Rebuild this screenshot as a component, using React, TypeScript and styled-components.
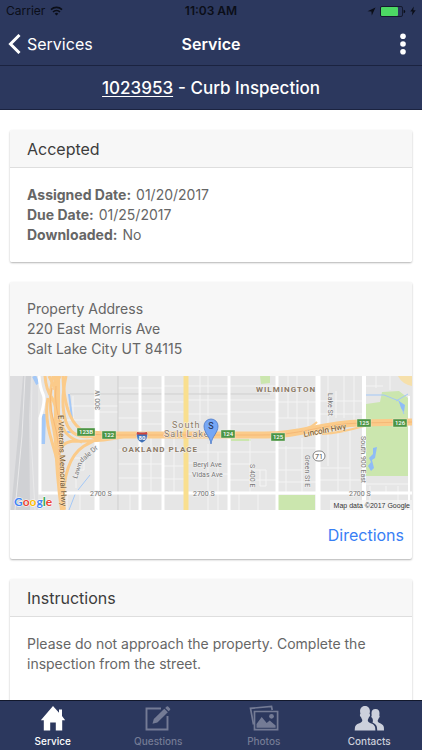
import React from "react";
import styled, { createGlobalStyle } from "styled-components";

const GlobalStyle = createGlobalStyle`
  * { box-sizing: border-box; }
  body {
    margin: 0;
    background: #fff;
    color: #666;
    font-family: Inter, "Liberation Sans", sans-serif;
    font-size: 14px;
    line-height: 20px;
  }
  button { font: inherit; border: 0; background: none; padding: 0; color: inherit; cursor: pointer; }
`;

const Screen = styled.div`
  display: flex;
  flex-direction: column;
  height: 100vh;
`;

const TopBar = styled.header`
  flex: none;
  background: #2c385e;
  color: #fff;
`;

const StatusBar = styled.div`
  display: grid;
  grid-template-columns: 1fr auto 1fr;
  align-items: center;
  height: 22px;
  padding: 0 6px;
  color: #0b0e18;
  font-size: 12px;
  line-height: 22px;
`;

const StatusGroup = styled.div<{ $end?: boolean }>`
  display: flex;
  align-items: center;
  justify-content: ${(p) => (p.$end ? "flex-end" : "flex-start")};
  gap: ${(p) => (p.$end ? 4 : 5)}px;
`;

const Clock = styled.time`
  font-weight: 600;
`;

const NavBar = styled.div`
  display: grid;
  grid-template-columns: 1fr auto 1fr;
  align-items: center;
  height: 44px;
  padding: 0 8px;
  border-bottom: 1px solid #1b2340;
`;

const BackLink = styled.a`
  display: flex;
  align-items: center;
  gap: 6px;
  color: #fff;
  font-size: 16px;
  text-decoration: none;
`;

const NavTitle = styled.h1`
  margin: 0;
  font-size: 16px;
  font-weight: 600;
`;

const MenuButton = styled.button`
  display: flex;
  justify-self: end;
  padding: 0 8px;
`;

const SubHeader = styled.h2`
  display: flex;
  justify-content: center;
  align-items: center;
  gap: 5px;
  height: 44px;
  margin: 0;
  border-bottom: 1px solid #1b2340;
  font-size: 17px;
  font-weight: 500;
`;

const OrderLink = styled.a`
  color: #fff;
  text-underline-offset: 2px;
`;

const Content = styled.main`
  flex: 1;
  min-height: 0;
  overflow-y: auto;
  scrollbar-width: none;
  display: flex;
  flex-direction: column;
  gap: 20px;
  padding: 20px 10px;
`;

const Card = styled.section`
  flex: none;
  overflow: hidden;
  border-radius: 2px;
  background: #fff;
  box-shadow: 0 1px 2px rgba(0, 0, 0, 0.3);
`;

const CardTitle = styled.h3`
  margin: 0;
  padding: 9px 17px 8px;
  border-bottom: 1px solid #dedede;
  background: #f7f7f7;
  color: #3c3c3c;
  font-size: 16px;
  font-weight: 400;
`;

const CardBody = styled.div<{ $shaded?: boolean }>`
  padding: 17px;
  background: ${(p) => (p.$shaded ? "#f7f7f7" : "#fff")};
`;

const Facts = styled.dl`
  margin: 0;
`;

const Fact = styled.div`
  display: flex;
  gap: 5px;
  dt { font-weight: 700; }
  dd { margin: 0; }
`;

const Address = styled.address`
  font-style: normal;
`;

const Paragraph = styled.p`
  margin: 0 0 20px;
`;

const CardFooter = styled.div`
  display: flex;
  justify-content: flex-end;
  align-items: center;
  height: 49px;
  padding: 0 8px;
`;

const TextLink = styled.a`
  color: #387ef5;
  font-size: 16px;
  text-decoration: none;
`;

const MapPicture = styled.svg`
  display: block;
  width: 100%;
  height: auto;
  font-family: Roboto, "Liberation Sans", sans-serif;
`;

const TabBar = styled.nav`
  flex: none;
  display: grid;
  grid-template-columns: repeat(4, 1fr);
  height: 50px;
  border-top: 1px solid #12182c;
  background: #2c385e;
`;

const tones = { active: "#fff", muted: "#747b95", bright: "#ccd0dc" };

const Tab = styled.button<{ $tone: keyof typeof tones }>`
  display: flex;
  flex-direction: column;
  align-items: center;
  gap: 2px;
  padding-top: 3px;
  color: ${(p) => tones[p.$tone]};
  font-size: 10px;
  font-weight: 500;
  line-height: 14px;
`;

const WifiIcon = () => (
  <svg width="13" height="10" viewBox="0 0 13 10" fill="none" stroke="currentColor" strokeWidth="1.6" aria-hidden="true">
    <path d="M1 3.6a8 8 0 0 1 11 0M3 6a5 5 0 0 1 7 0" />
    <path d="M6.5 9.6 4.7 7.7a2.6 2.6 0 0 1 3.6 0Z" fill="currentColor" stroke="none" />
  </svg>
);

const LocationIcon = () => (
  <svg width="9" height="9" viewBox="0 0 9 9" fill="currentColor" aria-hidden="true">
    <path d="M8.5.5 4.8 8.5 4.4 4.6.5 4.3Z" />
  </svg>
);

const BatteryIcon = () => (
  <svg width="26" height="11" viewBox="0 0 26 11" aria-hidden="true">
    <rect x=".5" y=".5" width="22" height="10" rx="1.5" fill="none" stroke="#141a2e" />
    <rect x="1" y="1" width="17" height="9" rx="1" fill="#4cd964" />
    <path d="M23.6 3.7q1.6.2 1.6 1.8t-1.6 1.8Z" fill="#0b0e18" />
  </svg>
);

const BoltIcon = () => (
  <svg width="6" height="10" viewBox="0 0 6 10" fill="currentColor" aria-hidden="true">
    <path d="M3.8.4.3 5.6h2.2L1.9 9.6 5.7 4.3H3.3Z" />
  </svg>
);

const BackIcon = () => (
  <svg width="13" height="20" viewBox="0 0 13 20" fill="none" stroke="currentColor" strokeWidth="3" aria-hidden="true">
    <path d="M11.5 1 2.5 10l9 9" />
  </svg>
);

const DotsIcon = () => (
  <svg width="6" height="22" viewBox="0 0 6 22" fill="currentColor" aria-hidden="true">
    <circle cx="3" cy="3.3" r="2.8" />
    <circle cx="3" cy="11" r="2.8" />
    <circle cx="3" cy="18.7" r="2.8" />
  </svg>
);

const HomeIcon = () => (
  <svg width="30" height="28" viewBox="0 0 30 28" fill="currentColor" aria-hidden="true">
    <path d="M15 2 2.8 16.2h3V26.500h6.400v-8h5.600v8h6.400V16.200h3L24 12V5.500h-3v3.200Z" />
  </svg>
);

const ComposeIcon = () => (
  <svg width="30" height="28" viewBox="0 0 30 28" fill="none" stroke="currentColor" aria-hidden="true">
    <path d="M18 4.500H3.500V25.500H24.500V12" strokeWidth="1.900" />
    <path d="M10.800 14.900 21.300 4.700 24.800 8.200 14.400 18.500 9.500 19.700Z" fill="currentColor" stroke="none" />
    <path d="m22.200 3.900 1.500-1.400q.700-.500 1.400.100l1.900 1.900q.600.700 0 1.400l-1.400 1.400Z" fill="currentColor" stroke="none" />
  </svg>
);

const PhotosIcon = () => (
  <svg width="30" height="28" viewBox="0 0 30 28" fill="none" stroke="currentColor" strokeWidth="1.700" aria-hidden="true">
    <path d="M4.500 20.500 1.500 4.300 22.500 2.400 23.200 6" />
    <path d="M5.500 7.500H28.600V25.600H5.500Z" />
    <path d="M7.500 23.700V20l5.200-7 5 6 3-2.500 5.900 5v2.200Z" fill="currentColor" stroke="none" />
    <circle cx="22.500" cy="12.300" r="2.400" fill="currentColor" stroke="none" />
  </svg>
);

const ContactsIcon = () => (
  <svg width="30" height="28" viewBox="0 0 30 28" fill="currentColor" aria-hidden="true">
    <path d="M11 2c3.400 0 5.100 2.500 4.900 5.600 0 1.200-.3 1.600-.3 2.300.9.300.5 2.700-.6 3.100-.3 1.500-1.200 2-1.200 3.400 0 3.300 7 2.200 7.400 7.300l.2 2.800H.7l.2-2.800c.4-5.100 7.400-4 7.400-7.300 0-1.400-1-1.900-1.300-3.400-1.100-.4-1.500-2.800-.6-3.100 0-.7-.3-1.100-.3-2.300C5.900 4.500 7.600 2 11 2Z" />
    <path d="M21.500 5c2.800 0 4.200 2 4 4.700 0 .9-.2 1.300-.2 1.900.7.300.4 2.200-.5 2.500-.3 1.400-1.100 1.700-1.100 2.900 0 2.700 5.900 2 6.200 6.600l.1 2.900h-6.800c0-4.500-.8-6.300-4.700-8.100.7-.7.500-3-.3-4.300-.9-.3-1.200-2.200-.5-2.500 0-.6-.2-1-.2-1.900C17.300 7 18.700 5 21.500 5Z" />
  </svg>
);

const ExitSign = ({ x, y, label, w = 14 }: { x: number; y: number; label: string; w?: number }) => (
  <g>
    <rect x={x - w / 2} y={y - 4} width={w} height="8" fill="#4b9444" stroke="#e9f2e6" strokeWidth=".4" />
    <text x={x} y={y + 2} fontSize="6" fontWeight="500" fill="#fff" textAnchor="middle">{label}</text>
  </g>
);

const minorStreets =
  "M57 30H87M57 44H87M87 30H108M87 36H108M63 20V44M108 12H153M108 26H153M108 42H130M108 74H130M108 88H153M108 102H153M130 35H153M130 48H153M120 117V134M153 10H176M153 26H176M153 36H176M153 74H176M153 90H176M153 103H176M141 62V117M164 62V117M176 10H219M176 24H219M176 38H219M190 0V45M198 0V40M198 68V134M176 76H219M176 87H198M176 98H219M208 76V134M219 10H267M219 24H267M219 36H267M219 48H267M219 76H267M219 88H240M219 104H267M240 62V117M250 94V110H256V94H242M229 117V134M248 117V134M267 12H308M267 26H308M267 42H308M278 0V42M287 0V52M298 24V50M267 72H308M276 70V117M292 62V117M267 94H292M267 106H308M318 0V48M326 15V42M334 0V42M344 0V45M308 25H354M308 38H354M318 56V90M328 54V117M340 54V117M308 92H340M308 104H354M360 110V134M376 110V117M388 110V134M354 108H398M354 10H373M366 0V12M380 0V14M62 82H74V94H66V112M57 117V134M70 117V134";

const StreetMap = () => (
  <MapPicture viewBox="0 0 402 134" role="img" aria-label="Map of South Salt Lake">
    <rect width="402" height="134" fill="#e6e6e6" />
    <path d="M0 0H28V134H0Z" fill="#dedee0" />
    <path d="M13 0h8l-2 40 1 94H1L8 60Z" fill="#d0d1d4" />
    <path d="M22 0 21 60 25 134M5 134 12 60 15 0" fill="none" stroke="#e9e9ea" strokeWidth="1" />
    <path d="M356 28l14-2 2-10 17-1 9 7v78H356Z" fill="#cbe6ae" />
    <path d="M266 119h39v15h-39ZM250 0h10v7l-9 1ZM221 63h20v2h-20Z" fill="#cbe6ae" />
    <path d={minorStreets} fill="none" stroke="#f4f4f4" strokeWidth="1" />
    <path d="M60 18H260M108 0V134" fill="none" stroke="#cfcfcf" strokeWidth="1" />
    <g fill="none" stroke="#a3c8f7">
      <path d="M24 0 28 8M34 38 33 68" strokeWidth="4" />
      <path d="M59 18 62 42M57 56H64" strokeWidth="2" />
      <path d="M80 99 68 114M66 116 59 134" strokeWidth="1" />
      <path d="M356 19H374L389 25 394 38M386 25 398 18" strokeWidth="1" />
    </g>
    <path d="M389 25 395 29 394 36 391 32ZM363 72 367 71 365 82 362 84 364 92 361 95 358 90 361 86 359 82 363 78Z" fill="#8fbcf6" />
    <g fill="none" stroke="#fff">
      <path d="M29 0Q30 12 33 18T30 42V117H402" strokeWidth="3" />
      <path d="M87 0V134M308 0V134" strokeWidth="5" />
      <path d="M130 0V134M153 0V134M219 0V134M267 0V134" strokeWidth="3" />
      <path d="M354 0V134" strokeWidth="4" />
      <path d="M399 20V134" strokeWidth="2" />
    </g>
    <path d="M176 0V134" stroke="#f9df8f" strokeWidth="5" />
    <path d="M388 0Q392 8 402 10V0Z" fill="#f6e0ab" />
    <g fill="none" stroke="#fbcb8a">
      <path d="M47 0V60Q48 100 53 134" strokeWidth="6" />
      <path d="M35 0Q36 14 42 22 48 32 48 60M43 0Q38 24 42 44T50 100M53 0Q54 40 70 53T96 62" strokeWidth="3" />
      <path d="M56 0Q50 28 56 46T84 60M38 22Q34 40 42 66T52 112M39 0 46 14M50 0 44 14" strokeWidth="3" />
      <path d="M53 134Q52 84 74 70T124 60M48 80Q50 66 64 65 90 66 116 60M50 44Q54 62 72 66" strokeWidth="3" />
      <path d="M70 56Q82 59 100 59H250C290 60 310 48 350 47L402 46" strokeWidth="7" />
      <path d="M276 56Q298 55 307 46M312 58Q330 57 354 50" strokeWidth="2" />
    </g>
    <path d="M42 12Q38 26 44 46T50 100M46 10Q44 30 51 50M70 56Q82 59 100 59H250C290 60 310 48 350 47L402 46" fill="none" stroke="#f5b877" strokeWidth="1" />
    <ExitSign x={76} y={56} label="123B" w={18} />
    <ExitSign x={99} y={59} label="122" />
    <ExitSign x={218} y={58} label="124" />
    <ExitSign x={268} y={61} label="125" />
    <ExitSign x={354} y={47} label="125" />
    <ExitSign x={390} y={47} label="126" />
    <path d="M127 56q5 1 10 0q2 8-5 11q-7-3-5-11Z" fill="#3f6fb5" stroke="#fff" strokeWidth=".5" />
    <path d="M127 56q5 1 10 0l.5 2.500h-11Z" fill="#d0453b" />
    <text x="132" y="64" fontSize="6" fontWeight="700" fill="#fff" textAnchor="middle">80</text>
    <rect x="303" y="75" width="12" height="10" rx="5" fill="#fff" stroke="#666" strokeWidth=".8" />
    <text x="309" y="83" fontSize="7" fill="#444" textAnchor="middle">71</text>
    <g fill="#8c7a66" stroke="#f3f3f3" strokeWidth="1" paintOrder="stroke" letterSpacing="1">
      <text x="246" y="16" fontSize="8" fontWeight="700">WILMINGTON</text>
      <text x="112" y="76" fontSize="8" fontWeight="700">OAKLAND PLACE</text>
      <text x="162" y="52" fontSize="9">South</text>
      <text x="154" y="61" fontSize="9">Salt Lake</text>
    </g>
    <g fill="#757575" stroke="#f3f3f3" strokeWidth="1" paintOrder="stroke" fontSize="7">
      <text x="183" y="91">Beryl Ave</text>
      <text x="182" y="101">Vidas Ave</text>
      <text x="80" y="120">2700 S</text>
      <text x="183" y="120">2700 S</text>
      <text x="339" y="120">2700 S</text>
      <text transform="translate(90 34) rotate(-90)">300 W</text>
      <text transform="translate(240 88) rotate(90)">S 400 E</text>
      <text transform="translate(318 17) rotate(90)">Lake St</text>
      <text transform="translate(295 79) rotate(90)">Green St E</text>
      <text transform="translate(351 60) rotate(90)">South 900 East</text>
      <text transform="translate(67 103) rotate(-72)">Lawn</text>
      <text transform="translate(72 87) rotate(-42)">dale Dr</text>
    </g>
    <g fill="#6b5231" stroke="#fbe0b8" strokeWidth="1" paintOrder="stroke" fontSize="8">
      <text transform="translate(48 39) rotate(88)">E Veterans Memorial Hwy</text>
      <text transform="translate(294 61) rotate(-11)">Lincoln Hwy</text>
    </g>
    <path d="M201 68C200 60 194 57 194 50a7 7 0 0 1 14 0C208 57 202 60 201 68Z" fill="#76a7f5" stroke="#4a78c8" strokeWidth=".8" />
    <text x="201" y="53" fontSize="9" fill="#1d2b4a" textAnchor="middle">S</text>
    <text x="4" y="130" fontSize="12" fontWeight="700" fontFamily="Lato, sans-serif" stroke="#fff" strokeWidth="1" paintOrder="stroke">
      <tspan fill="#4285f4">G</tspan><tspan fill="#ea4335">o</tspan><tspan fill="#fbbc05">o</tspan><tspan fill="#4285f4">g</tspan><tspan fill="#34a853">l</tspan><tspan fill="#ea4335">e</tspan>
    </text>
    <rect x="320" y="124" width="82" height="10" fill="#f5f5f5" fillOpacity=".7" />
    <text x="400" y="132" fontSize="7" fill="#333" textAnchor="end" fontFamily="Liberation Sans, sans-serif">Map data ©2017 Google</text>
  </MapPicture>
);

const facts = [
  ["Assigned Date:", "01/20/2017"],
  ["Due Date:", "01/25/2017"],
  ["Downloaded:", "No"],
];

const tabs = [
  { label: "Service", tone: "active", Icon: HomeIcon },
  { label: "Questions", tone: "muted", Icon: ComposeIcon },
  { label: "Photos", tone: "muted", Icon: PhotosIcon },
  { label: "Contacts", tone: "bright", Icon: ContactsIcon },
] as const;

export default function App() {
  return (
    <Screen>
      <GlobalStyle />
      <TopBar>
        <StatusBar>
          <StatusGroup>Carrier <WifiIcon /></StatusGroup>
          <Clock>11:03 AM</Clock>
          <StatusGroup $end><LocationIcon /><BatteryIcon /><BoltIcon /></StatusGroup>
        </StatusBar>
        <NavBar>
          <BackLink href="#services"><BackIcon />Services</BackLink>
          <NavTitle>Service</NavTitle>
          <MenuButton aria-label="More options"><DotsIcon /></MenuButton>
        </NavBar>
        <SubHeader><OrderLink href="#order">1023953</OrderLink> - Curb Inspection</SubHeader>
      </TopBar>
      <Content>
        <Card>
          <CardTitle>Accepted</CardTitle>
          <CardBody>
            <Facts>
              {facts.map(([name, value]) => (
                <Fact key={name}><dt>{name}</dt><dd>{value}</dd></Fact>
              ))}
            </Facts>
          </CardBody>
        </Card>
        <Card>
          <CardBody $shaded>
            <Address>Property Address<br />220 East Morris Ave<br />Salt Lake City UT 84115</Address>
          </CardBody>
          <StreetMap />
          <CardFooter><TextLink href="#directions">Directions</TextLink></CardFooter>
        </Card>
        <Card>
          <CardTitle>Instructions</CardTitle>
          <CardBody>
            <Paragraph>Please do not approach the property. Complete the inspection from the street.</Paragraph>
          </CardBody>
        </Card>
      </Content>
      <TabBar>
        {tabs.map(({ label, tone, Icon }) => (
          <Tab key={label} $tone={tone} aria-current={tone === "active" ? "page" : undefined}><Icon />{label}</Tab>
        ))}
      </TabBar>
    </Screen>
  );
}
